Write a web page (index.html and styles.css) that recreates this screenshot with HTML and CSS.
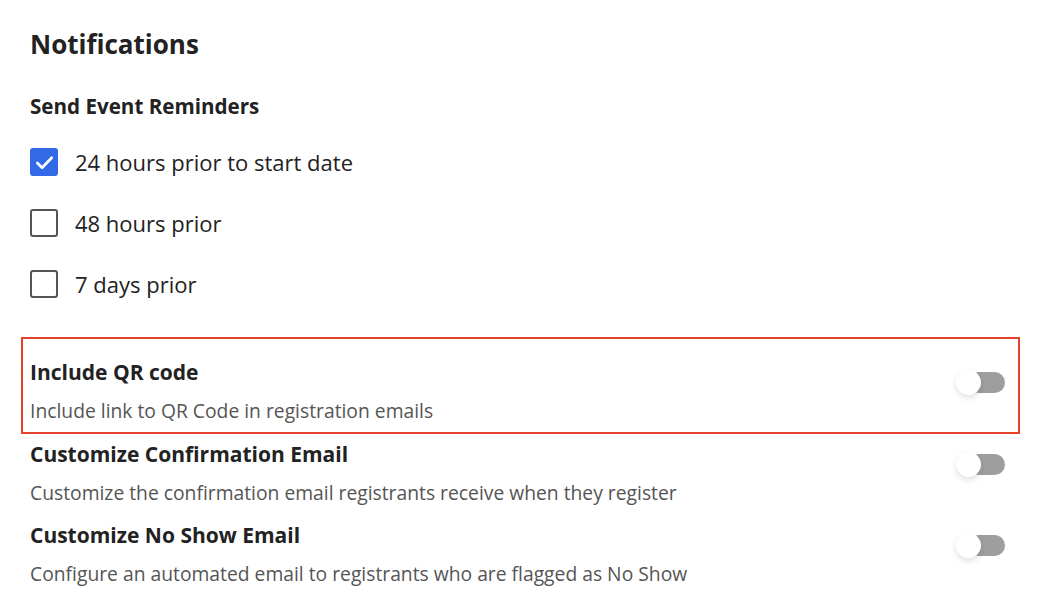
FILE: index.html
```html
<!DOCTYPE html>
<html lang="en">
<head>
    <meta charset="UTF-8">
    <meta name="viewport" content="width=device-width, initial-scale=1.0">
    <title>Notifications</title>
    <link rel="stylesheet" href="styles.css">
</head>
<body>
    <div class="settings">
        <h1>Notifications</h1>

        <!-- Reminders -->
        <h2>Send Event Reminders</h2>
        <div class="reminders">
            <label class="check-row">
                <span class="checkbox checked">
                    <svg viewBox="0 0 24 24" width="23" height="23"><path d="M4.5 12.5l5 5L19.5 7" fill="none" stroke="#fff" stroke-width="2.8" stroke-linecap="round" stroke-linejoin="round"/></svg>
                </span>
                <span>24 hours prior to start date</span>
            </label>
            <label class="check-row">
                <span class="checkbox"></span>
                <span>48 hours prior</span>
            </label>
            <label class="check-row">
                <span class="checkbox"></span>
                <span>7 days prior</span>
            </label>
        </div>

        <!-- Email options -->
        <div class="highlight">
            <div class="option">
                <div class="option-text">
                    <div class="option-title">Include QR code</div>
                    <div class="option-desc">Include link to QR Code in registration emails</div>
                </div>
                <span class="toggle"></span>
            </div>
        </div>
        <div class="option">
            <div class="option-text">
                <div class="option-title">Customize Confirmation Email</div>
                <div class="option-desc">Customize the confirmation email registrants receive when they register</div>
            </div>
            <span class="toggle"></span>
        </div>
        <div class="option">
            <div class="option-text">
                <div class="option-title">Customize No Show Email</div>
                <div class="option-desc">Configure an automated email to registrants who are flagged as No Show</div>
            </div>
            <span class="toggle"></span>
        </div>
    </div>
</body>
</html>
```

FILE: styles.css
```css
body {
    margin: 0;
    background-color: #fff;
    font-family: "Open Sans", "Noto Sans", sans-serif;
    color: #222;
}
.settings {
    padding: 28px 33px 0 30px;
}
h1 {
    margin: 0;
    font-size: 26px;
    line-height: 32px;
    font-weight: 700;
}
h2 {
    margin: 33px 0 0;
    font-size: 20.6px;
    line-height: 26px;
    font-weight: 700;
}
.reminders {
    display: flex;
    flex-direction: column;
    gap: 33px;
    margin-top: 29px;
}
.check-row {
    display: flex;
    align-items: center;
    gap: 17px;
    height: 28px;
    font-size: 22px;
    line-height: 28px;
    color: #222;
}
.checkbox {
    box-sizing: border-box;
    width: 28px;
    height: 28px;
    border: 2px solid #555;
    border-radius: 3px;
    display: flex;
    align-items: center;
    justify-content: center;
}
.checkbox.checked {
    background-color: #3169e6;
    border-color: #3169e6;
}
.highlight {
    margin: 39px -15px 8px -9px;
    padding: 21px 13px 10px 7px;
    border: 2px solid #e8412b;
}
.option {
    display: flex;
    align-items: flex-start;
    justify-content: space-between;
    margin-bottom: 19px;
}
.highlight .option {
    margin-bottom: 0;
}
.option-title {
    font-size: 21px;
    line-height: 24px;
    font-weight: 700;
}
.option-desc {
    margin-top: 16px;
    font-size: 19.3px;
    line-height: 22px;
    color: #555;
}
.toggle {
    position: relative;
    width: 37px;
    height: 21px;
    border-radius: 11px;
    background-color: #9e9e9e;
    margin-top: 12px;
}
.toggle::before {
    content: "";
    position: absolute;
    left: -12px;
    top: -2px;
    width: 25px;
    height: 25px;
    border-radius: 50%;
    background-color: #fff;
    box-shadow: 0 3px 6px rgba(0, 0, 0, 0.12);
}
```
